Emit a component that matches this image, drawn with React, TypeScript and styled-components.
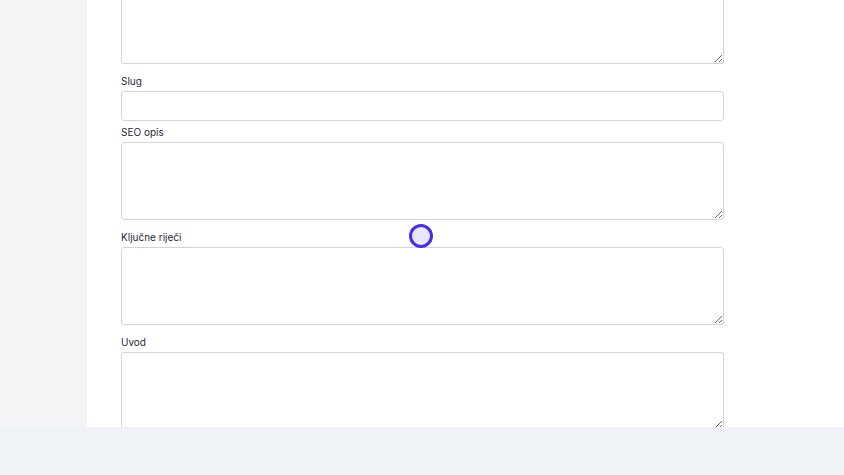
import React from "react";
import styled, { createGlobalStyle } from "styled-components";

const Global = createGlobalStyle`
  html, body { margin: 0; padding: 0; background: #ffffff; }
  body { font-family: Inter, "Noto Sans", sans-serif; overflow: hidden; }
  * { box-sizing: border-box; }
`;

const Page = styled.div`
  width: 844px;
  height: 475px;
  display: flex;
  flex-direction: column;
  position: relative;
  overflow: hidden;
`;

const Body = styled.div`
  display: flex;
  height: 427px;
  flex: none;
`;

const Sidebar = styled.aside`
  width: 87px;
  flex: none;
  background: #f3f4f6;
`;

const Main = styled.main`
  flex: 1;
  background: #ffffff;
  overflow: hidden;
  padding-left: 34px;
`;

const Form = styled.form`
  width: 603px;
  margin-top: -14px;
  display: flex;
  flex-direction: column;
`;

const Field = styled.div`
  display: flex;
  flex-direction: column;
  margin-bottom: 3px;
`;

const Label = styled.label`
  display: block;
  font-size: 10px;
  line-height: 16px;
  color: #1f2937;
  margin-bottom: 2px;
`;

const Input = styled.input`
  display: block;
  width: 100%;
  height: 30px;
  border: 1px solid #d4d4d8;
  border-radius: 3px;
  background: #ffffff;
  outline: none;
`;

const TextArea = styled.textarea`
  display: block;
  width: 100%;
  height: 78px;
  border: 1px solid #d4d4d8;
  border-radius: 3px;
  background: #ffffff;
  resize: vertical;
  outline: none;
  margin: 0 0 6px 0;
`;

const Footer = styled.footer`
  flex: 1;
  background: #eff2f7;
`;

const Cursor = styled.div`
  position: absolute;
  left: 409px;
  top: 224px;
  width: 24px;
  height: 24px;
  border-radius: 50%;
  border: 3px solid #4b2ee6;
  background: #e8e6fa;
`;

export default function App() {
  return (
    <>
      <Global />
      <Page>
        <Body>
          <Sidebar />
          <Main>
            <Form>
              <Field>
                <TextArea />
              </Field>
              <Field>
                <Label>Slug</Label>
                <Input />
              </Field>
              <Field>
                <Label>SEO opis</Label>
                <TextArea />
              </Field>
              <Field>
                <Label>Ključne riječi</Label>
                <TextArea />
              </Field>
              <Field>
                <Label>Uvod</Label>
                <TextArea />
              </Field>
            </Form>
          </Main>
        </Body>
        <Footer />
        <Cursor />
      </Page>
    </>
  );
}
